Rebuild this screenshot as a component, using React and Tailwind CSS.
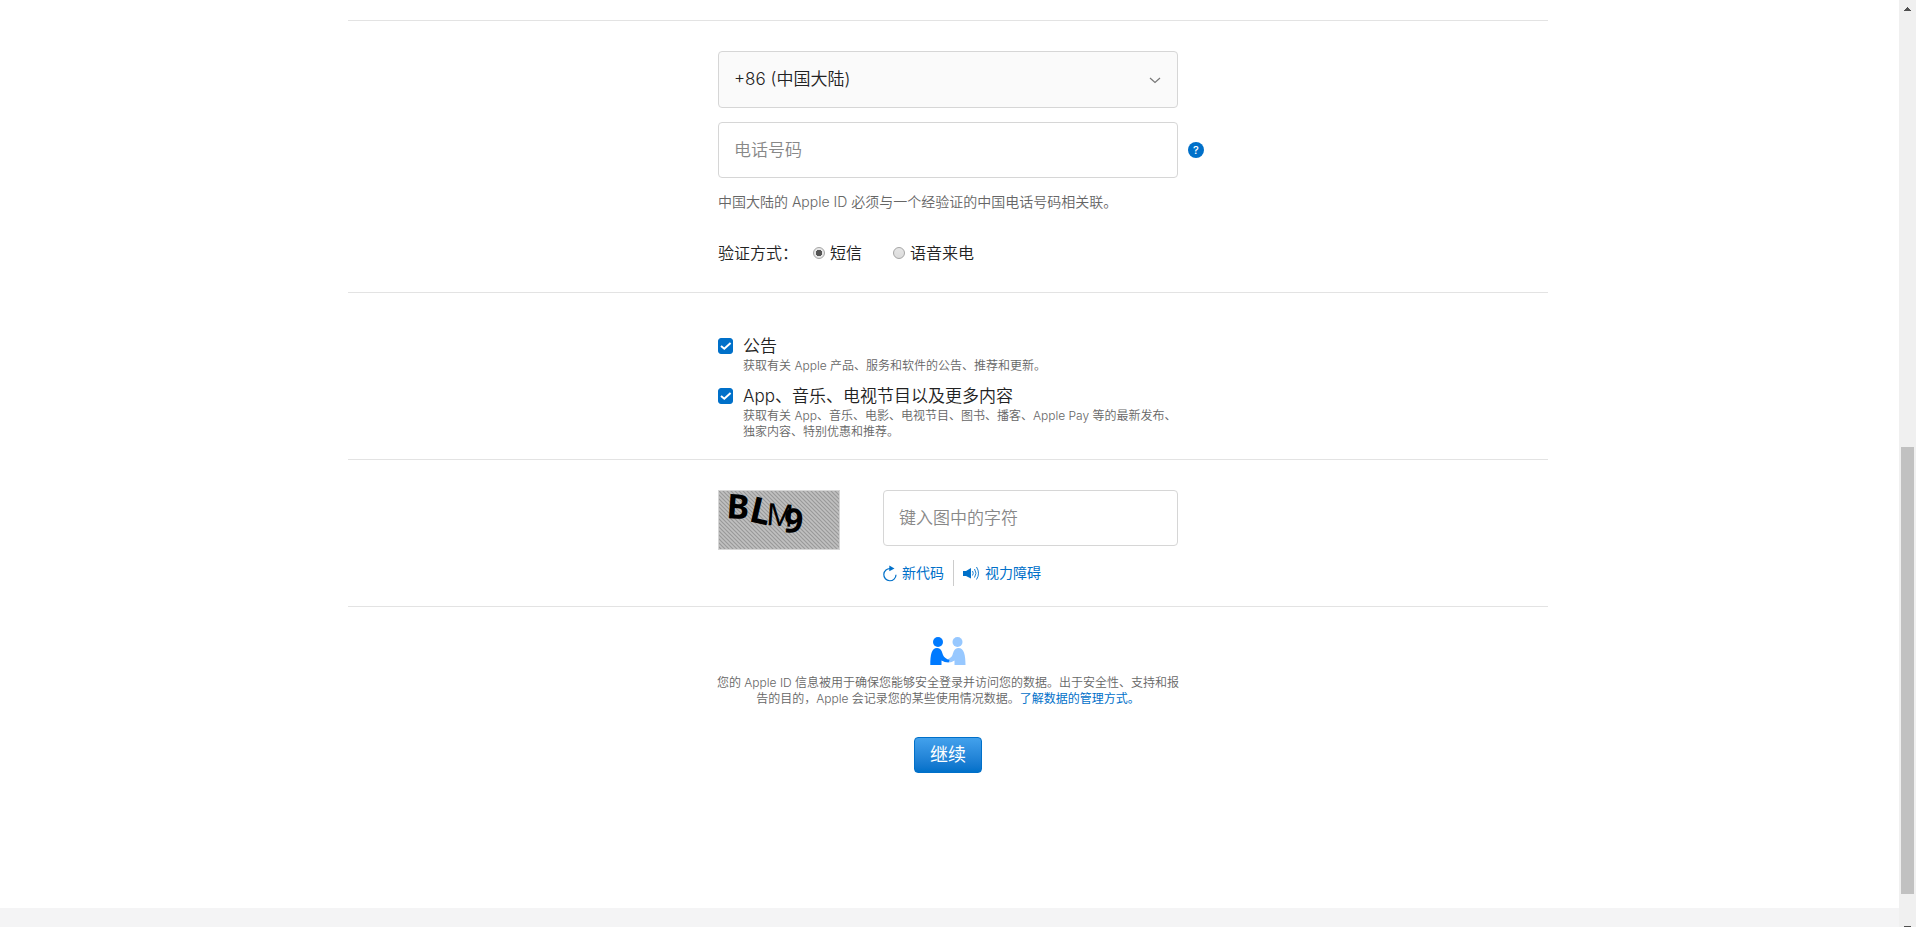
import { useState } from 'react';

function Section({ children, className = '' }) {
  return (
    <section className={`border-b border-[#e3e3e3] ${className}`}>
      <div className="mx-auto w-full max-w-[460px]">{children}</div>
    </section>
  );
}

function CheckOption({ id, title, children }) {
  const [checked, setChecked] = useState(true);

  return (
    <div className="flex gap-[10px]">
      <span className="relative mt-1 h-4 w-[15px] shrink-0">
        <input
          id={id}
          type="checkbox"
          checked={checked}
          onChange={(e) => setChecked(e.target.checked)}
          className="block h-4 w-[15px] appearance-none rounded-[3px] border border-[#0070c9] checked:bg-[#0070c9]"
        />
        {checked && (
          <svg className="pointer-events-none absolute inset-0" width="15" height="16" viewBox="0 0 15 16" fill="none" stroke="#fff" strokeWidth="2">
            <path d="M3 8l3.3 2.7L12.6 5" />
          </svg>
        )}
      </span>
      <div>
        <label htmlFor={id} className="block text-[17px] leading-6 text-[#222]">{title}</label>
        <p className="text-xs leading-4 text-[#666]">{children}</p>
      </div>
    </div>
  );
}

function Captcha() {
  return (
    <svg className="shrink-0 overflow-visible border border-[#d6d6d6]" width="122" height="60" viewBox="0 0 120 58" role="img" aria-label="BLM9">
      <defs>
        <pattern id="hatch" width="4" height="4" patternUnits="userSpaceOnUse">
          <rect width="4" height="4" fill="#c0c0c0" />
          <path d="M-1 -1l6 6M-1 3l2 2M3 -1l2 2" stroke="#999" strokeWidth="1.2" />
        </pattern>
      </defs>
      <rect width="120" height="58" fill="url(#hatch)" />
      <g fill="#000" fontFamily="Noto Sans, sans-serif" fontSize="34">
        <text x="7" y="27" fontWeight="bold" transform="rotate(4 7 27)">B</text>
        <text x="29" y="30" fontWeight="bold" fontSize="36" transform="rotate(13 29 30)">L</text>
        <text x="47" y="34" fontFamily="Liberation Sans, sans-serif" fontSize="32" transform="rotate(4 47 34)">M</text>
        <text x="64" y="41" fontWeight="bold" transform="rotate(4 64 41)">9</text>
      </g>
    </svg>
  );
}

function Scrollbar() {
  return (
    <div className="flex w-[17px] shrink-0 flex-col items-center bg-[#f0f0f0]">
      <svg className="mt-[7px]" width="7" height="4" viewBox="0 0 7 4" fill="#505050" shapeRendering="crispEdges">
        <path d="M3 0h1v1h1v1h1v1h1v1H0V3h1V2h1V1h1z" />
      </svg>
      <div className="mt-[436px] h-[447px] w-[13px] bg-[#c1c1c1]" />
      <div className="mt-auto h-px w-[7px] bg-[#505050]" />
    </div>
  );
}

export default function App() {
  const [method, setMethod] = useState('sms');

  return (
    <div className="flex h-screen overflow-hidden bg-white font-['Inter','Noto_Sans_CJK_SC',sans-serif] font-[350] text-[#222]">
      <div className="flex min-w-0 flex-1 flex-col">
        <main className="flex-1 pr-[3px]">
          <div className="mx-auto max-w-[1200px]">
            <div className="h-[21px] border-b border-[#e3e3e3]" />

            <Section className="pt-[30px] pb-[27px]">
              <div className="relative">
                <select
                  aria-label="国家或地区代码"
                  className="block h-[57px] w-full appearance-none rounded-[4px] border border-[#d6d6d6] bg-[#fafafa] px-[15px] text-[17px]"
                >
                  <option>+86 (中国大陆)</option>
                </select>
                <svg className="pointer-events-none absolute top-[26px] right-[17px]" width="12" height="7" viewBox="0 0 12 7" fill="none" stroke="#777" strokeWidth="1.2">
                  <path d="M1 1l5 4.5L11 1" />
                </svg>
              </div>
              <div className="relative mt-[14px]">
                <input
                  type="tel"
                  aria-label="电话号码"
                  placeholder="电话号码"
                  className="block h-14 w-full rounded-[4px] border border-[#d6d6d6] px-[15px] text-[17px] placeholder:text-[#888]"
                />
                <button
                  type="button"
                  aria-label="帮助"
                  className="absolute top-5 left-full ml-[10px] flex size-4 items-center justify-center rounded-full bg-[#0070c9] text-[11px] leading-4 font-medium text-white"
                >
                  ?
                </button>
              </div>
              <p className="mt-[14px] text-sm leading-5 text-[#666]">
                中国大陆的 Apple ID 必须与一个经验证的中国电话号码相关联。
              </p>
              <div className="mt-[29px] flex items-center text-base leading-6" role="radiogroup" aria-label="验证方式">
                <span className="w-[95px]">验证方式：</span>
                {[
                  ['sms', '短信'],
                  ['voice', '语音来电'],
                ].map(([value, label]) => (
                  <label key={value} className="mr-[31px] flex items-center gap-[5px]">
                    <input
                      type="radio"
                      name="method"
                      value={value}
                      checked={method === value}
                      onChange={() => setMethod(value)}
                      className="size-3 appearance-none rounded-full border border-[#a5a5a5] bg-linear-to-b from-[#e6e6e6] to-[#dcdcdc] checked:bg-[radial-gradient(circle,#555_0_3px,#e6e6e6_3.5px)]"
                    />
                    {label}
                  </label>
                ))}
              </div>
            </Section>

            <Section className="pt-[41px] pb-[19px]">
              <div className="flex flex-col gap-[10px]">
                <CheckOption id="news" title="公告">
                  获取有关 Apple 产品、服务和软件的公告、推荐和更新。
                </CheckOption>
                <CheckOption id="apps" title="App、音乐、电视节目以及更多内容">
                  获取有关 App、音乐、电影、电视节目、图书、播客、Apple Pay 等的最新发布、独家内容、特别优惠和推荐。
                </CheckOption>
              </div>
            </Section>

            <Section className="pt-[30px] pb-5">
              <div className="flex items-start justify-between">
                <Captcha />
                <div className="w-[295px]">
                  <input
                    type="text"
                    aria-label="键入图中的字符"
                    placeholder="键入图中的字符"
                    className="block h-14 w-full rounded-[4px] border border-[#d6d6d6] px-[15px] text-[17px] placeholder:text-[#888]"
                  />
                  <div className="mt-[14px] flex h-[26px] items-center text-sm font-normal text-[#0070c9]">
                    <button type="button" className="flex h-full items-center gap-[5px] border-r border-[#ccc] pr-[9px]">
                      <svg width="14" height="18" viewBox="0 0 14 18" fill="none" stroke="#0070c9" strokeWidth="1.2">
                        <path d="M7.5 4.6A6.1 6.1 0 1 0 13 10.7" />
                        <path d="M6.3 1.5L11.5 4.5L6.3 7.2z" fill="#0070c9" stroke="none" />
                      </svg>
                      新代码
                    </button>
                    <button type="button" className="flex h-full items-center gap-[5px] pl-[9px]">
                      <svg width="17" height="14" viewBox="0 0 17 14" fill="none" stroke="#0070c9" strokeWidth="0.9">
                        <path d="M0 5h3l5-3v10.5L3 10H0z" fill="#0070c9" stroke="none" />
                        <path d="M9.5 5q1.5 2.2 0 4.5M11.5 3q3 4.2 0 8.5M13.5 1q4 6.2 0 12.5" />
                      </svg>
                      视力障碍
                    </button>
                  </div>
                </div>
              </div>
            </Section>

            <div className="mx-auto flex w-full max-w-[468px] flex-col items-center pt-[30px]">
              <svg width="36" height="28" viewBox="0 0 36 28">
                <g fill="#97c8ff">
                  <circle cx="27.5" cy="5" r="5" />
                  <path d="M35.5 28C35.5 18 34 11 28.5 11c-4.5 0-5 4-6 7-.9 2.3-2.5 3.2-5 4.3l1.5 3.2c2 0 3.5-.8 5.500-2V28z" />
                </g>
                <g fill="#007aff">
                  <circle cx="8" cy="5" r="5" />
                  <path d="M.3 28C.3 18 1.5 11 7 11c4.5 0 5 4 6 7 1 2.5 3.5 4 6.5 5l-.8 2.5c-3 0-5-.8-7.2-2V28z" />
                </g>
              </svg>
              <p className="mt-[10px] text-center text-xs leading-4 text-[#666]">
                您的 Apple ID 信息被用于确保您能够安全登录并访问您的数据。出于安全性、支持和报告的目的，Apple 会记录您的某些使用情况数据。<a href="#" className="font-normal text-[#0070c9]">了解数据的管理方式。</a>
              </p>
              <button
                type="button"
                className="mt-[30px] h-9 rounded-[4px] border border-[#0070c9] bg-linear-to-b from-[#42a1ec] to-[#0070c9] px-[15px] text-lg leading-8 font-normal text-white"
              >
                继续
              </button>
            </div>
          </div>
        </main>
        <footer className="h-[19px] bg-[#f4f4f5]" />
      </div>
      <Scrollbar />
    </div>
  );
}
